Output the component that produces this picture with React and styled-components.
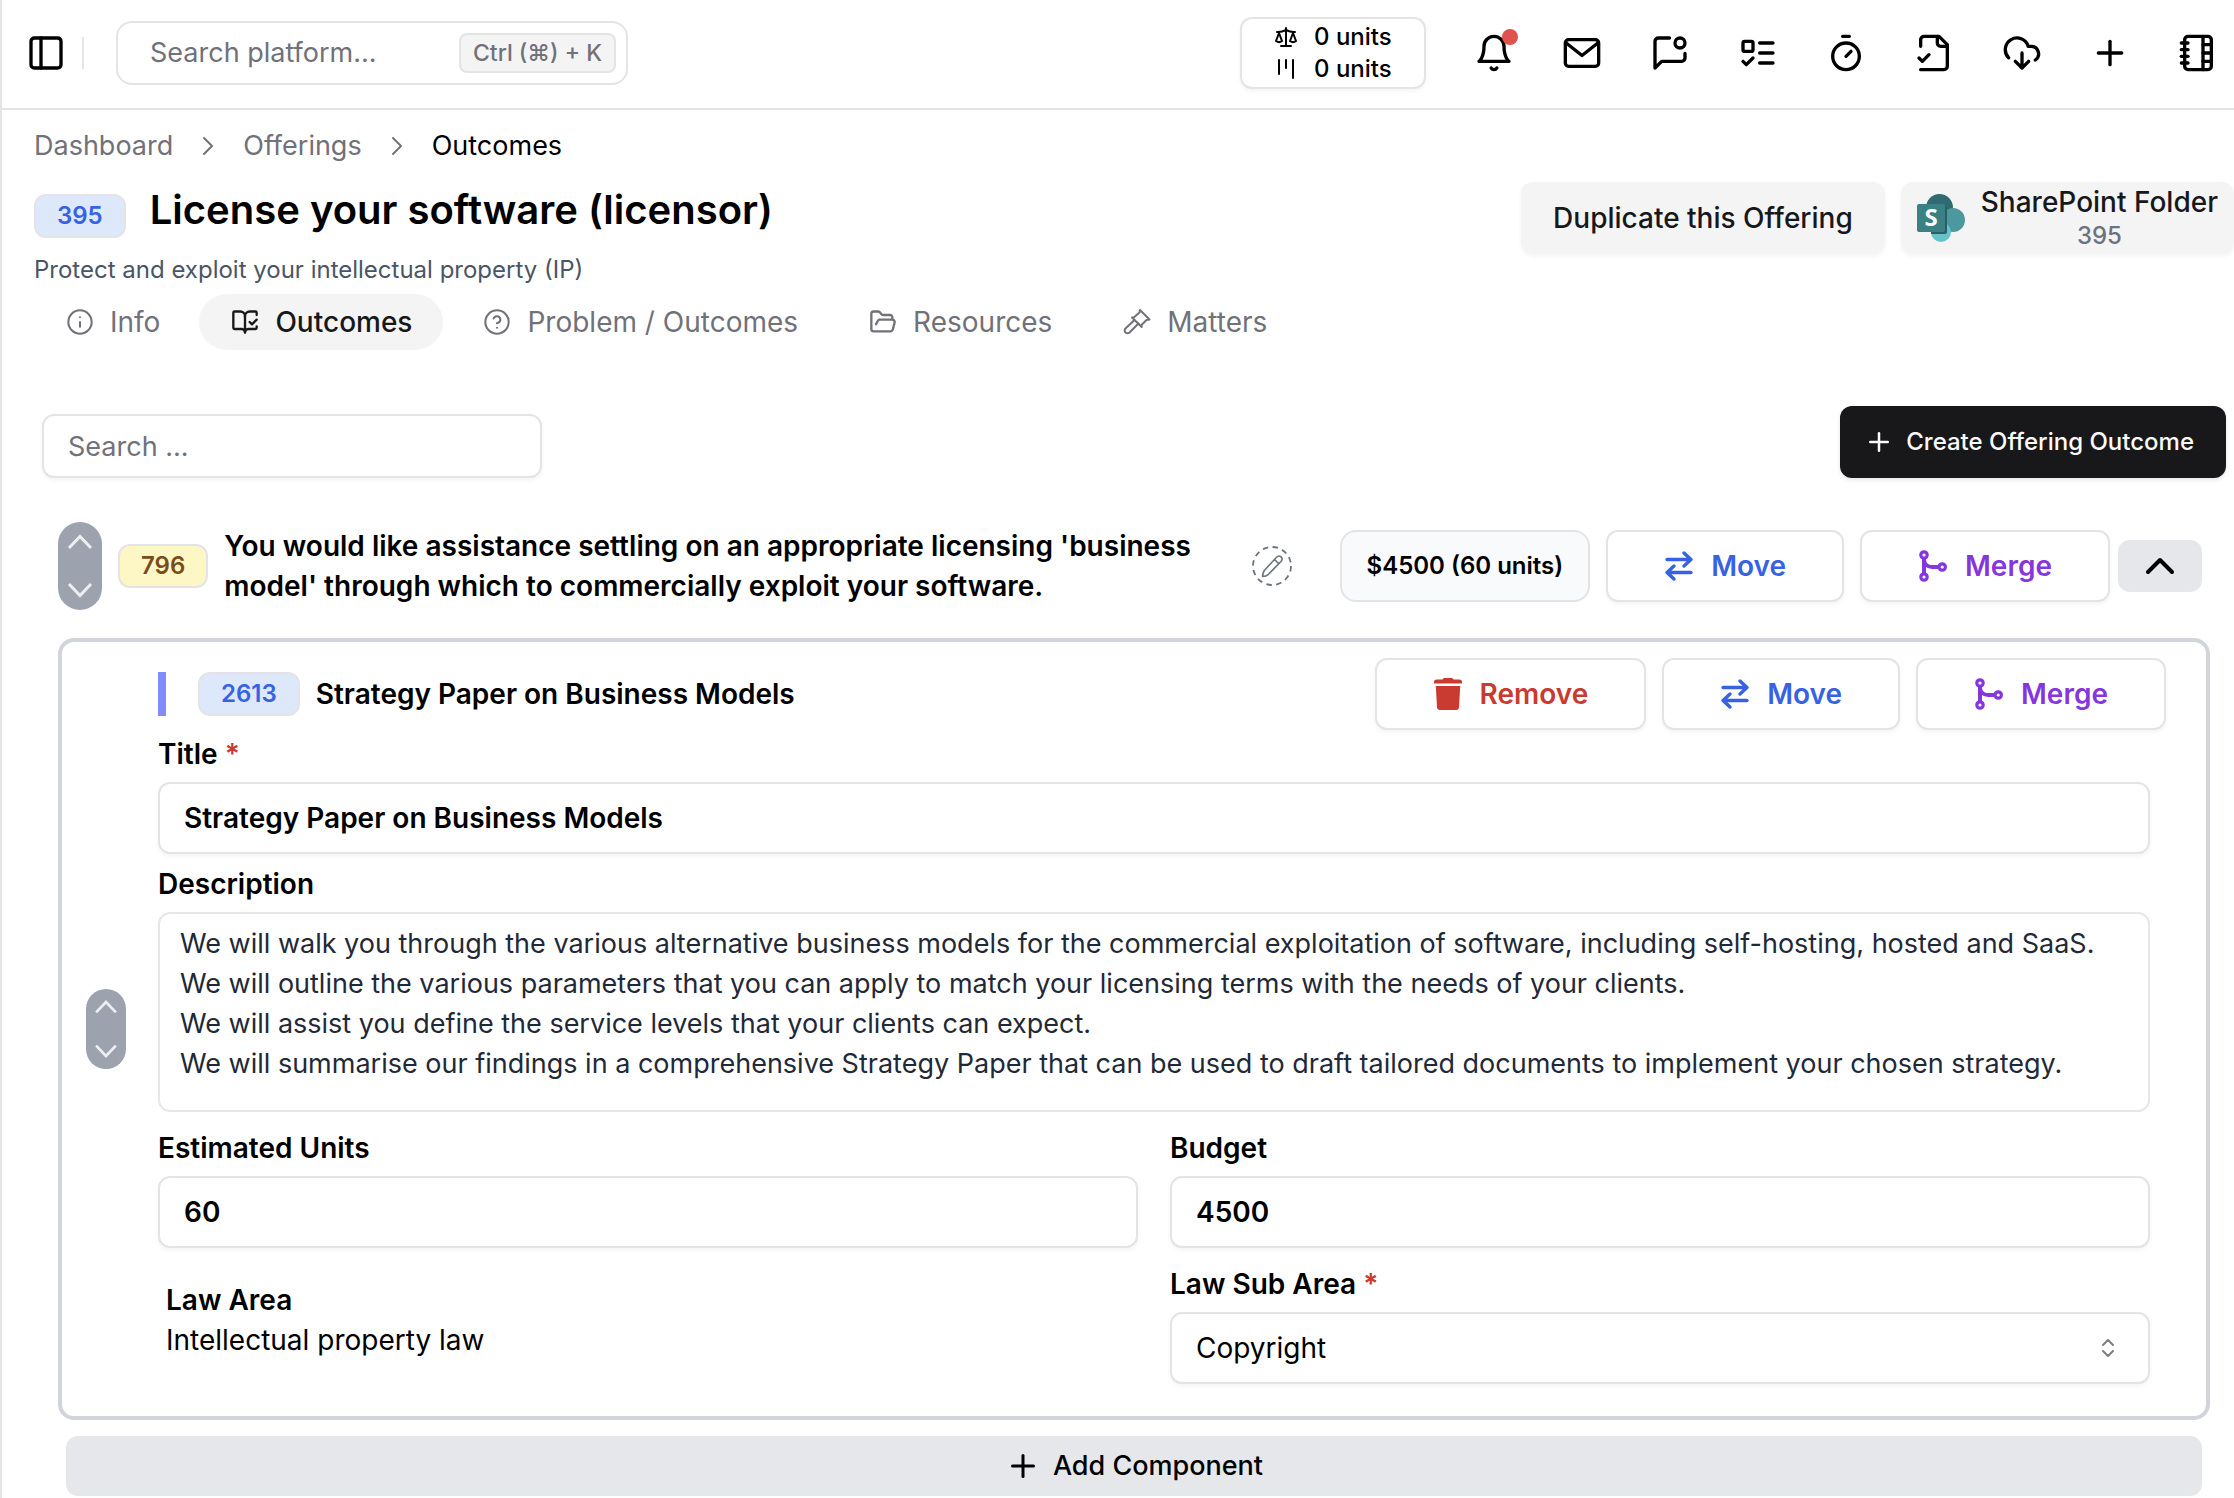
import React, { useId } from "react";
import styled, { createGlobalStyle } from "styled-components";
import {
  PanelLeft, Timer, Plus, NotebookTabs, Scale, Kanban, ChevronRight,
  Info, BookOpenCheck, FolderOpen, ChevronUp, ChevronsUpDown,
} from "lucide-react";

const c = {
  line: "#e4e4e7",
  muted: "#71717a",
  black: "#000000",
  soft: "#f4f4f5",
  gray: "#e5e7eb",
  blue: "#3662e3",
  purple: "#8636dd",
  red: "#c93a30",
};

const GlobalStyle = createGlobalStyle`
  *, *::before, *::after { box-sizing: border-box; }
  body {
    margin: 0;
    background: #fff;
    color: ${c.black};
    font-family: Inter, "Noto Sans", sans-serif;
    font-size: 28px;
    line-height: 40px;
  }
  button, input, select, textarea { font: inherit; color: inherit; margin: 0; }
  button { cursor: pointer; padding: 0; border: 0; background: none; }
  svg { display: block; flex: none; }
  h1, h2, h3, p, ol, dl, dd { margin: 0; padding: 0; }
`;

const Shell = styled.div`
  min-height: 100vh;
  border-left: 2px solid ${c.line};
`;

/* ---------- top bar ---------- */

const TopBar = styled.header`
  display: flex;
  align-items: center;
  height: 110px;
  padding: 0 16px 2px 24px;
  border-bottom: 2px solid ${c.line};
`;

const Separator = styled.span`
  width: 2px;
  height: 32px;
  margin: 0 32px 0 16px;
  background: ${c.line};
`;

const PlatformSearch = styled.label`
  display: flex;
  align-items: center;
  width: 512px;
  height: 64px;
  padding: 0 10px 0 32px;
  border: 2px solid ${c.line};
  border-radius: 16px;
  font-size: 27px;

  input {
    flex: 1;
    min-width: 0;
    padding: 0;
    border: 0;
    outline: 0;
    background: none;
  }
  input::placeholder { color: ${c.muted}; opacity: 1; }
`;

const Shortcut = styled.kbd`
  height: 40px;
  padding: 0 12px;
  border: 2px solid ${c.line};
  border-radius: 8px;
  background: ${c.soft};
  color: ${c.muted};
  font-family: inherit;
  font-size: 23px;
  font-weight: 500;
  line-height: 36px;
  white-space: nowrap;
`;

const TopActions = styled.nav`
  display: flex;
  align-items: center;
  gap: 48px;
  margin-left: auto;
`;

const UnitsBox = styled.button`
  display: flex;
  flex-direction: column;
  justify-content: center;
  width: 186px;
  height: 72px;
  padding: 0 32px;
  border: 2px solid ${c.line};
  border-radius: 12px;
  box-shadow: 0 2px 4px rgba(0, 0, 0, 0.05);
  font-size: 24px;
  font-weight: 500;
  line-height: 32px;
`;

const UnitsLine = styled.span`
  display: flex;
  align-items: center;
  gap: 16px;
`;

const IconButton = styled.button`
  position: relative;
  width: 40px;
  height: 40px;
`;

const AlertDot = styled.span`
  position: absolute;
  top: -4px;
  right: -4px;
  width: 16px;
  height: 16px;
  border-radius: 50%;
  background: #df524e;
`;

/* ---------- page heading ---------- */

const Crumbs = styled.ol`
  display: flex;
  align-items: center;
  gap: 19px;
  padding: 16px 32px 0;
  list-style: none;
  color: ${c.muted};
  font-size: 27px;

  a { color: inherit; text-decoration: none; }
  [aria-current] { color: ${c.black}; }
`;

const Heading = styled.section`
  display: flex;
  justify-content: space-between;
  align-items: flex-start;
  margin-top: 16px;
  padding-left: 32px;
`;

const HeadingText = styled.div`
  display: flex;
  flex-direction: column;
  gap: 16px;
`;

const TitleRow = styled.div`
  display: flex;
  align-items: flex-end;
  gap: 24px;
  height: 56px;
`;

const PageTitle = styled.h1`
  font-size: 40px;
  font-weight: 600;
  line-height: 56px;
`;

const Subtitle = styled.p`
  color: #4b5563;
  font-size: 24px;
  line-height: 32px;
`;

const Badge = styled.span`
  flex: none;
  height: 44px;
  padding: 0 21px;
  border: 2px solid ${c.line};
  border-radius: 12px;
  background: ${(p) => (p.$tone === "yellow" ? "#fcf7c4" : "#dde8fa")};
  color: ${(p) => (p.$tone === "yellow" ? "#7b4b1b" : c.blue)};
  font-size: 24px;
  font-weight: 600;
  line-height: 40px;
`;

const HeadingActions = styled.div`
  display: flex;
  gap: 16px;
`;

const SoftButton = styled.button`
  display: flex;
  align-items: center;
  gap: 16px;
  height: 72px;
  padding: 0 ${(p) => (p.$tight ? 16 : 32)}px;
  border-radius: 12px;
  background: ${c.soft};
  box-shadow: 0 2px 4px rgba(0, 0, 0, 0.05);
  color: #18181b;
  font-weight: 500;
  white-space: nowrap;
`;

const FolderLabel = styled.span`
  display: flex;
  flex-direction: column;
  align-items: center;
  line-height: 36px;

  small { color: #6b7280; font-size: 24px; line-height: 32px; }
`;

const Tabs = styled.nav`
  display: flex;
  gap: 8px;
  margin-top: 8px;
  padding-left: 32px;
`;

const Tab = styled.a`
  display: flex;
  align-items: center;
  gap: 16px;
  height: 56px;
  padding: 0 31px 0 32px;
  border-radius: 28px;
  background: ${(p) => (p.$active ? c.soft : "transparent")};
  color: ${(p) => (p.$active ? "#18181b" : c.muted)};
  font-weight: ${(p) => (p.$active ? 500 : 400)};
  text-decoration: none;
`;

/* ---------- toolbar ---------- */

const Toolbar = styled.div`
  display: flex;
  justify-content: space-between;
  align-items: flex-end;
  margin-top: 56px;
  padding: 0 8px 0 40px;
`;

const control = `
  width: 100%;
  height: 72px;
  padding: 0 24px;
  border: 2px solid ${c.line};
  border-radius: 12px;
  background: #fff;
  box-shadow: 0 2px 4px rgba(0, 0, 0, 0.05);
  outline: 0;
`;

const TextInput = styled.input`
  ${control}
  font-weight: 600;
`;

const ListSearch = styled.input`
  ${control}
  width: 500px;
  height: 64px;
  font-size: 27px;
  &::placeholder { color: ${c.muted}; opacity: 1; }
`;

const CreateButton = styled.button`
  display: flex;
  align-items: center;
  gap: 12px;
  height: 72px;
  padding: 0 32px 0 24px;
  border-radius: 12px;
  background: #18181b;
  box-shadow: 0 2px 4px rgba(0, 0, 0, 0.1);
  color: #fafafa;
  font-size: 24px;
  font-weight: 500;
`;

/* ---------- outcome ---------- */

const OutcomeRow = styled.div`
  display: flex;
  align-items: center;
  gap: 16px;
  margin-top: 44px;
  padding: 0 32px 0 56px;
`;

const OutcomeText = styled.h2`
  flex: 1;
  max-width: 980px;
  font-size: 28px;
  font-weight: 600;
  line-height: 40px;
`;

const OutcomeTools = styled.div`
  display: flex;
  align-items: center;
  gap: 16px;
  margin-left: auto;
`;

const EditButton = styled.button`
  width: 40px;
  height: 40px;
  margin-right: 32px;
  color: #6b7280;
`;

const Price = styled.span`
  height: 72px;
  padding: 0 25px;
  border: 2px solid ${c.line};
  border-radius: 16px;
  background: #f9fafb;
  font-size: 24px;
  font-weight: 600;
  line-height: 68px;
  white-space: nowrap;
`;

const ActionButton = styled.button`
  display: flex;
  align-items: center;
  gap: 16px;
  height: 72px;
  padding: 0 56px 0 55px;
  border: 2px solid ${c.line};
  border-radius: 12px;
  background: #fff;
  box-shadow: 0 2px 4px rgba(0, 0, 0, 0.05);
  color: ${(p) => p.$color};
  font-weight: 600;
`;

const CollapseButton = styled.button`
  display: grid;
  place-items: center;
  width: 84px;
  height: 52px;
  margin-left: -8px;
  border-radius: 12px;
  background: ${c.gray};
`;

const MoverPill = styled.div`
  flex: none;
  display: flex;
  flex-direction: column;
  justify-content: space-between;
  width: ${(p) => p.$size}px;
  height: ${(p) => p.$size * 2}px;
  border-radius: ${(p) => p.$size / 2}px;
  background: #9ca3af;
  color: #eceef1;

  button { display: grid; place-items: center; height: ${(p) => p.$size - 4}px; }
`;

/* ---------- component card ---------- */

const Card = styled.section`
  display: flex;
  align-items: center;
  gap: 32px;
  margin: 28px 24px 0 56px;
  padding: 0 40px 0 24px;
  border: 4px solid #d1d5db;
  border-radius: 16px;
`;

const CardBody = styled.div`
  flex: 1;
  min-width: 0;
  padding: 16px 0 32px;
`;

const CardHead = styled.div`
  display: flex;
  align-items: center;
  gap: 16px;
`;

const Accent = styled.span`
  width: 8px;
  height: 44px;
  margin-right: 16px;
  background: #818cf8;
`;

const CardTitle = styled.h3`
  font-size: 28px;
  font-weight: 600;
  line-height: 40px;
`;

const CardActions = styled.div`
  display: flex;
  gap: 16px;
  margin-left: auto;
`;

const Fields = styled.div`
  display: flex;
  flex-direction: column;
  gap: 10px;
  margin: 4px 16px 0 0;
`;

const FieldGrid = styled.div`
  display: grid;
  grid-template-columns: 1fr 1fr;
  gap: 16px 32px;
  margin-top: 6px;
`;

const FieldBox = styled.div`
  display: flex;
  flex-direction: column;
  gap: 8px;
  min-width: 0;

  label { font-weight: 600; }
`;

const Star = styled.span`
  color: ${c.red};
`;

const Description = styled.textarea`
  width: 100%;
  height: 200px;
  padding: 10px 16px 10px 20px;
  border: 2px solid ${c.gray};
  border-radius: 12px;
  outline: 0;
  resize: none;
  overflow: hidden;
  color: #1f2937;
  font-size: 27px;
  line-height: 40px;
`;

const SelectWrap = styled.div`
  position: relative;

  select { ${control} appearance: none; }
  svg {
    position: absolute;
    top: 24px;
    right: 30px;
    opacity: 0.5;
    pointer-events: none;
  }
`;

const Fact = styled.dl`
  padding: 16px 8px;
  dt { font-weight: 600; }
`;

const AddButton = styled.button`
  display: flex;
  justify-content: center;
  align-items: center;
  gap: 12px;
  height: 60px;
  margin: 16px 32px 2px 64px;
  border-radius: 12px;
  background: ${c.gray};
  font-size: 27px;
  font-weight: 500;
`;

const Stack = styled.main`
  display: flex;
  flex-direction: column;
`;

/* ---------- icons ---------- */

function Stroke({ size = 40, width = 2, box = 24, children }) {
  return (
    <svg width={size} height={size} viewBox={`0 0 ${box} ${box}`} fill="none" stroke="currentColor"
      strokeWidth={width} strokeLinecap="round" strokeLinejoin="round" aria-hidden="true">
      {children}
    </svg>
  );
}

const BellIcon = () => (
  <Stroke>
    <path d="M6 8a6 6 0 0 1 12 0c0 7 3 9 3 9H3s3-2 3-9" />
    <path d="M10.3 21a1.94 1.94 0 0 0 3.4 0" />
  </Stroke>
);

const MailIcon = () => (
  <Stroke>
    <rect x="2" y="4" width="20" height="16" rx="2" />
    <path d="m21.5 6-9.5 7.5L2.5 6" />
  </Stroke>
);

const MessageIcon = () => (
  <Stroke>
    <path d="M11.7 3H5a2 2 0 0 0-2 2v16l4-4h12a2 2 0 0 0 2-2v-2.7" />
    <circle cx="18" cy="6" r="3" />
  </Stroke>
);

const TodoIcon = () => (
  <Stroke>
    <rect x="3" y="5" width="6" height="6" rx="1" />
    <path d="m3 17 2 2 4-4M13 6h8M13 12h8M13 18h8" />
  </Stroke>
);

const FileIcon = () => (
  <Stroke>
    <path d="M4 22h14a2 2 0 0 0 2-2V7l-5-5H6a2 2 0 0 0-2 2v4" />
    <path d="M14 2v4a2 2 0 0 0 2 2h4M3 15l2 2 4-4" />
  </Stroke>
);

const CloudIcon = () => (
  <Stroke>
    <path d="M4 14.9A7 7 0 1 1 15.7 8h1.8a4.5 4.5 0 0 1 2.5 8.2" />
    <path d="M12 12v9M8 17l4 4 4-4" />
  </Stroke>
);

const HelpIcon = () => (
  <Stroke size={28} width={1.75}>
    <circle cx="12" cy="12" r="10" />
    <path d="M9.1 9a3 3 0 0 1 5.8 1c0 2-3 3-3 3M12 17h.01" />
  </Stroke>
);

const GavelIcon = () => (
  <Stroke size={28} box={28}>
    <path d="M17 2 26.5 11.5l-3 .5-5 5 .2 2L9 9.500l2-.2 5.500-4.800z" />
    <path d="m11.5 12-9 8.500a2.700 2.700 0 0 0 4 4l9-9" />
  </Stroke>
);

const PencilIcon = () => (
  <Stroke box={40} width={1.6}>
    <circle cx="20" cy="20" r="19" strokeDasharray="5.5 4.45" strokeLinecap="butt" strokeWidth="1.8" />
    <path d="M10.5 30.5c.2-2.5.8-4.500 1.800-6L24.500 11.300c3.200-3.200 7.500.8 4.500 4.200L16.500 28.300c-1.500 1.200-3.500 2-6 2.200zM22.500 13.500l4.300 4.300" />
  </Stroke>
);

const MoveIcon = () => (
  <Stroke size={32} box={32} width={3.4}>
    <path d="M4 9.500h24M21 3l7 6.500-7 6.500M28 22.500H4M11 16l-7 6.500 7 6.500" />
  </Stroke>
);

const MergeIcon = () => (
  <Stroke size={32} box={32} width={3.2}>
    <circle cx="7" cy="5" r="3.2" />
    <circle cx="7" cy="27" r="3.2" />
    <circle cx="25.2" cy="17" r="3.2" />
    <path strokeWidth="4" strokeLinecap="butt" d="M7 8.500v15M7 9c0 5 3.500 8 8 8h7" />
  </Stroke>
);

const TrashIcon = () => (
  <svg width="32" height="32" viewBox="0 0 32 32" fill="currentColor" aria-hidden="true">
    <path d="M12.500 0h7a2 2 0 0 1 2 1.500h6a2.500 2.500 0 0 1 2.500 2.500v1.500H2V4a2.500 2.500 0 0 1 2.500-2.500h6a2 2 0 0 1 2-1.500z" />
    <path d="M3.800 8h24.400L27 29.500A2.600 2.600 0 0 1 24.500 32h-17A2.600 2.600 0 0 1 5 29.500z" />
  </svg>
);

const MoverArrow = ({ size, down }) => (
  <svg width={size} height={size} viewBox="0 0 40 40" fill="none" stroke="currentColor" strokeWidth="3" aria-hidden="true">
    <path d={down ? "M9 14l11 11.500L31 14" : "M9 26l11-11.500L31 26"} />
  </svg>
);

const SharePointLogo = () => (
  <svg width="48" height="48" viewBox="0 0 48 48" aria-hidden="true">
    <circle cx="22.5" cy="13.5" r="13.5" fill="#2f6b70" />
    <circle cx="36" cy="26" r="12" fill="#4b999e" />
    <circle cx="24" cy="38" r="10" fill="#65c1cc" />
    <path d="M14 12h14a2 2 0 0 1 2 2v24a2 2 0 0 1-2 2H14z" fill="#2b5f64" />
    <rect y="10" width="28" height="28" rx="2" fill="#3a8085" />
    <text x="14" y="32" textAnchor="middle" fill="#fff" fontFamily="Open Sans, sans-serif" fontSize="24" fontWeight="700">S</text>
  </svg>
);

/* ---------- parts ---------- */

const actions = {
  remove: { label: "Remove", color: c.red, Icon: TrashIcon },
  move: { label: "Move", color: c.blue, Icon: MoveIcon },
  merge: { label: "Merge", color: c.purple, Icon: MergeIcon },
};

function Action({ kind }) {
  const { label, color, Icon } = actions[kind];
  return (
    <ActionButton type="button" $color={color}>
      <Icon />
      {label}
    </ActionButton>
  );
}

function Mover({ size }) {
  const arrow = size - 4;
  return (
    <MoverPill $size={size}>
      <button type="button" aria-label="Move up"><MoverArrow size={arrow} /></button>
      <button type="button" aria-label="Move down"><MoverArrow size={arrow} down /></button>
    </MoverPill>
  );
}

function Field({ label, required, children }) {
  const id = useId();
  return (
    <FieldBox>
      <label htmlFor={id}>
        {label} {required && <Star>*</Star>}
      </label>
      {children(id)}
    </FieldBox>
  );
}

const topIcons = [
  ["Notifications", <><BellIcon /><AlertDot /></>],
  ["Mail", <MailIcon />],
  ["Messages", <MessageIcon />],
  ["Tasks", <TodoIcon />],
  ["Timer", <Timer size={40} />],
  ["Documents", <FileIcon />],
  ["Downloads", <CloudIcon />],
  ["Add", <Plus size={40} />],
  ["Notebook", <NotebookTabs size={40} />],
];

const tabs = [
  ["Info", <Info size={28} strokeWidth={1.75} />],
  ["Outcomes", <BookOpenCheck size={28} />],
  ["Problem / Outcomes", <HelpIcon />],
  ["Resources", <FolderOpen size={28} />],
  ["Matters", <GavelIcon />],
];

const description = [
  "We will walk you through the various alternative business models for the commercial exploitation of software, including self-hosting, hosted and SaaS.",
  "We will outline the various parameters that you can apply to match your licensing terms with the needs of your clients.",
  "We will assist you define the service levels that your clients can expect.",
  "We will summarise our findings in a comprehensive Strategy Paper that can be used to draft tailored documents to implement your chosen strategy.",
].join("\n");

export default function App() {
  return (
    <Shell>
      <GlobalStyle />
      <TopBar>
        <IconButton type="button" aria-label="Toggle sidebar"><PanelLeft size={40} /></IconButton>
        <Separator />
        <PlatformSearch>
          <input type="text" placeholder="Search platform..." aria-label="Search platform" />
          <Shortcut>Ctrl (⌘) + K</Shortcut>
        </PlatformSearch>
        <TopActions>
          <UnitsBox type="button">
            <UnitsLine><Scale size={24} />0 units</UnitsLine>
            <UnitsLine><Kanban size={24} />0 units</UnitsLine>
          </UnitsBox>
          {topIcons.map(([label, icon]) => (
            <IconButton key={label} type="button" aria-label={label}>{icon}</IconButton>
          ))}
        </TopActions>
      </TopBar>

      <Stack>
        <Crumbs>
          <li><a href="#dashboard">Dashboard</a></li>
          <li aria-hidden="true"><ChevronRight size={32} strokeWidth={1.5} /></li>
          <li><a href="#offerings">Offerings</a></li>
          <li aria-hidden="true"><ChevronRight size={32} strokeWidth={1.5} /></li>
          <li aria-current="page">Outcomes</li>
        </Crumbs>

        <Heading>
          <HeadingText>
            <TitleRow>
              <Badge>395</Badge>
              <PageTitle>License your software (licensor)</PageTitle>
            </TitleRow>
            <Subtitle>Protect and exploit your intellectual property (IP)</Subtitle>
          </HeadingText>
          <HeadingActions>
            <SoftButton type="button">Duplicate this Offering</SoftButton>
            <SoftButton type="button" $tight>
              <SharePointLogo />
              <FolderLabel>SharePoint Folder<small>395</small></FolderLabel>
            </SoftButton>
          </HeadingActions>
        </Heading>

        <Tabs>
          {tabs.map(([label, icon]) => (
            <Tab key={label} href="#tab" $active={label === "Outcomes"}>{icon}{label}</Tab>
          ))}
        </Tabs>

        <Toolbar>
          <ListSearch type="text" placeholder="Search ..." aria-label="Search outcomes" />
          <CreateButton type="button"><Plus size={30} />Create Offering Outcome</CreateButton>
        </Toolbar>

        <OutcomeRow>
          <Mover size={44} />
          <Badge $tone="yellow">796</Badge>
          <OutcomeText>
            You would like assistance settling on an appropriate licensing 'business model' through which to
            commercially exploit your software.
          </OutcomeText>
          <OutcomeTools>
            <EditButton type="button" aria-label="Edit outcome"><PencilIcon /></EditButton>
            <Price>$4500 (60 units)</Price>
            <Action kind="move" />
            <Action kind="merge" />
            <CollapseButton type="button" aria-label="Collapse">
              <ChevronUp size={48} />
            </CollapseButton>
          </OutcomeTools>
        </OutcomeRow>

        <Card>
          <Mover size={40} />
          <CardBody>
            <CardHead>
              <Accent />
              <Badge>2613</Badge>
              <CardTitle>Strategy Paper on Business Models</CardTitle>
              <CardActions>
                <Action kind="remove" />
                <Action kind="move" />
                <Action kind="merge" />
              </CardActions>
            </CardHead>
            <Fields>
              <Field label="Title" required>
                {(id) => <TextInput id={id} type="text" defaultValue="Strategy Paper on Business Models" />}
              </Field>
              <Field label="Description">
                {(id) => <Description id={id} defaultValue={description} />}
              </Field>
              <FieldGrid>
                <Field label="Estimated Units">
                  {(id) => <TextInput id={id} type="text" defaultValue="60" />}
                </Field>
                <Field label="Budget">
                  {(id) => <TextInput id={id} type="text" defaultValue="4500" />}
                </Field>
                <Fact>
                  <dt>Law Area</dt>
                  <dd>Intellectual property law</dd>
                </Fact>
                <Field label="Law Sub Area" required>
                  {(id) => (
                    <SelectWrap>
                      <select id={id} defaultValue="Copyright">
                        <option>Copyright</option>
                      </select>
                      <ChevronsUpDown size={24} />
                    </SelectWrap>
                  )}
                </Field>
              </FieldGrid>
            </Fields>
          </CardBody>
        </Card>

        <AddButton type="button"><Plus size={36} />Add Component</AddButton>
      </Stack>
    </Shell>
  );
}
